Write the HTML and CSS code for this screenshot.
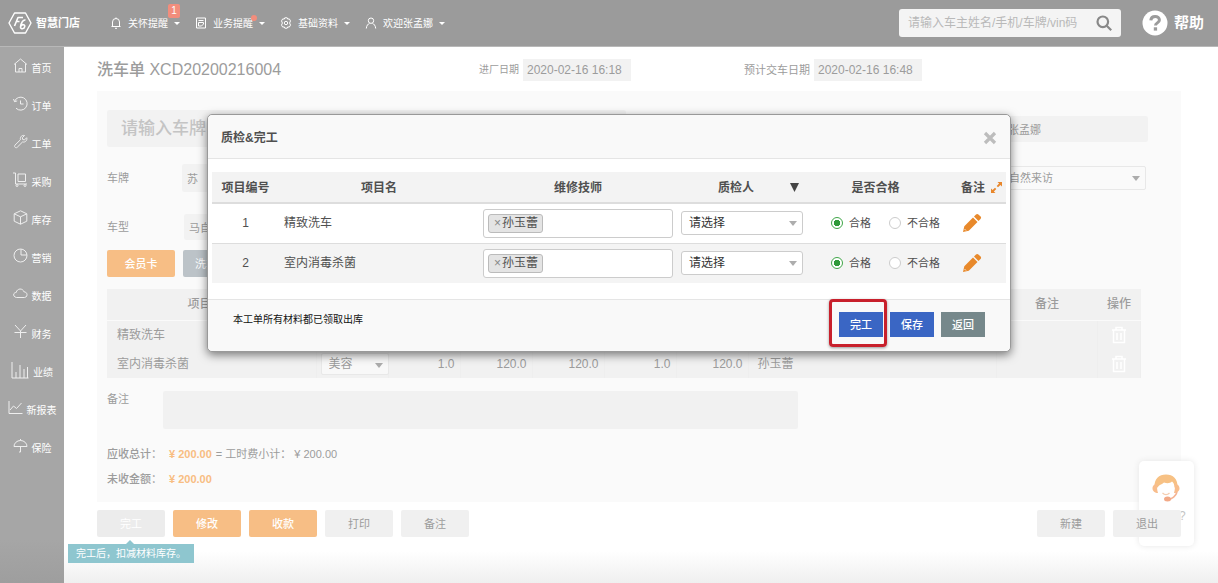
FILE: index.html
```html
<!DOCTYPE html>
<html lang="zh-CN">
<head>
<meta charset="utf-8">
<title>智慧门店 - 洗车单</title>
<link rel="stylesheet" href="styles.css">
</head>
<body>
<header class="topbar">
  <a class="brand" href="#">
    <svg width="24" height="24" viewBox="0 0 24 24" fill="none" stroke="currentColor" stroke-width="1.4" stroke-linejoin="round"><path d="M6.500 2h11l5.500 10-5.500 10h-11L1 12z"/><path d="M6.500 15l3.500-8.500h5M8 10.500h3.500M17.500 9c-3-.5-4.500 4-5 7 0 2.500 3.800 2.200 4.200-.3.400-2.300-2.500-2.800-3.700-.7" stroke-width="1.600"/></svg>
    <span>智慧门店</span>
  </a>
  <nav class="topnav">
    <button class="topnav-item" type="button">
      <svg class="nav-icon" viewBox="0 0 12 12"><path d="M1.500 9.500h9M2.500 9.500V5a3.500 3.500 0 0 1 7 0v4.500M5 11.300h2M6 .5v1"/></svg>
      <span class="nav-text">关怀提醒<b class="badge">1</b></span><i class="caret"></i>
    </button>
    <button class="topnav-item" type="button">
      <svg class="nav-icon" viewBox="0 0 12 12"><path d="M1.500 1h9v10h-9zM3.500 3.500h5M3.500 5.500h5v1.500l-2 2h-3z"/></svg>
      <span class="nav-text">业务提醒<b class="dot"></b></span><i class="caret"></i>
    </button>
    <button class="topnav-item" type="button">
      <svg class="nav-icon" viewBox="0 0 12 12"><path d="M4.800.8h2.400l.5 1.300 1.600-.2 1.200 2L9.600 6l.9 2.100-1.200 2-1.600-.2-.5 1.300H4.800l-.5-1.300-1.600.2-1.200-2L2.400 6l-.9-2.100 1.200-2 1.600.2z"/><circle cx="6" cy="6" r="1.700"/></svg>
      <span class="nav-text">基础资料</span><i class="caret"></i>
    </button>
    <button class="topnav-item" type="button">
      <svg class="nav-icon" viewBox="0 0 12 12"><circle cx="6" cy="3.700" r="2.700"/><path d="M1.300 11.500c.2-3 1.800-4.500 3.200-5.200M10.700 11.500c-.2-3-1.800-4.500-3.200-5.200"/></svg>
      <span class="nav-text">欢迎张孟娜</span><i class="caret"></i>
    </button>
  </nav>
  <form class="search">
    <input type="text" aria-label="搜索" placeholder="请输入车主姓名/手机/车牌/vin码">
    <button type="button" aria-label="搜索"><svg width="16" height="16" viewBox="0 0 16 16" fill="none" stroke="currentColor" stroke-width="2.200"><circle cx="6.800" cy="6.800" r="5.300"/><path d="M10.700 10.700l4.500 4.500"/></svg></button>
  </form>
  <a class="help" href="#">
    <svg width="26" height="26" viewBox="0 0 26 26"><circle cx="13" cy="13" r="12.500" fill="#fff"/><path d="M8.800 10.300c.2-2.600 2-3.900 4.300-3.900 2.500 0 4.300 1.400 4.300 3.500 0 3-3.900 2.900-3.900 5.600" fill="none" stroke="#9b9b9b" stroke-width="3"/><rect x="11.800" y="17.300" width="3.300" height="3.300" fill="#9b9b9b"/></svg>
    <span>帮助</span>
  </a>
</header>

<div class="shell">
  <nav class="sidebar">
    <a href="#"><svg class="side-icon" viewBox="0 0 15 15"><path d="M1 6.500L7.500 1 14 6.500M2.500 5.500V14h10V5.500M6 14v-3.500h3V14"/></svg>首页</a>
    <a href="#"><svg class="side-icon" viewBox="0 0 15 15"><path d="M1.500 5.500A6.500 6.500 0 1 1 3 12.200M.5 3l1 2.700 2.700-.8M7.500 4.500V8h3"/></svg>订单</a>
    <a href="#"><svg class="side-icon" viewBox="0 0 15 15"><path d="M11.500 1.500L9.300 3.700l.4 1.800 1.800.4 2.200-2.200c.9 2.200-1.200 5-4.200 4.300l-5.300 5.300c-1.300 1.300-3.600-.6-2.200-2.200l5.400-5.300C6.700 2.800 9.300.8 11.500 1.500z"/></svg>工单</a>
    <a href="#"><svg class="side-icon" viewBox="0 0 15 15"><path d="M0 1h2.500v11H14M5 2h7.500v7.500H5z"/><circle cx="4" cy="13.500" r="1"/><circle cx="12" cy="13.500" r="1"/></svg>采购</a>
    <a href="#"><svg class="side-icon" viewBox="0 0 15 15"><path d="M7.500.8l6.300 3v7.400l-6.300 3-6.300-3V3.800zM1.200 3.800l6.300 3 6.300-3M7.500 6.800v7.400"/></svg>库存</a>
    <a href="#"><svg class="side-icon" viewBox="0 0 15 15"><circle cx="7.500" cy="7.500" r="6.500"/><path d="M8 1v6h6"/></svg>营销</a>
    <a href="#"><svg class="side-icon" viewBox="0 0 15 15"><path d="M3.500 11.500C-.3 11-.2 6.500 3.200 6.500 4 2 10 2 10.800 5.700c4.200.2 4.200 5.500.7 5.800z"/></svg>数据</a>
    <a href="#"><svg class="side-icon" viewBox="0 0 15 15"><path d="M2 1l5.500 6L13 1M7.500 7v7M1.500 8.500h12"/></svg>财务</a>
    <a href="#"><svg class="side-icon side-icon-wide" viewBox="0 0 18 18"><path d="M1 1v16h16.500M5 17v-6M9 17V4M13 17V8M16.500 17V6"/></svg>业绩</a>
    <a href="#"><svg class="side-icon" viewBox="0 0 15 15"><path d="M1 1v12.500h13.500M2 10l3.500-4 3 2.500L13.500 3"/></svg>新报表</a>
    <a href="#"><svg class="side-icon" viewBox="0 0 15 15"><path d="M1 8.500a6.500 6 0 0 1 13 0zM7.500 1v1.500M7.500 8.500V14H6"/></svg>保险</a>
  </nav>

  <main class="main">
    <div class="titlebar">
      <h1>洗车单 XCD20200216004</h1>
      <div class="date"><label class="date-label" for="in">进厂日期</label><input id="in" type="text" value="2020-02-16 16:18"></div>
      <div class="date"><label for="out">预计交车日期</label><input id="out" type="text" value="2020-02-16 16:48"></div>
    </div>

    <section class="panel">
      <div class="form-row form-row-first">
        <input class="field plate-search" type="text" aria-label="车牌查询" placeholder="请输入车牌">
        <input class="field advisor" type="text" aria-label="服务顾问" value="张孟娜">
      </div>
      <div class="form-row form-row-plate">
        <label for="plate">车牌</label>
        <input class="field" id="plate" type="text" value="苏">
        <span class="select source"><select aria-label="客户来源"><option>自然来访</option></select></span>
      </div>
      <div class="form-row form-row-model">
        <label for="model">车型</label>
        <input class="field" id="model" type="text" value="马自">
      </div>
      <div class="cards">
        <button class="btn btn-orange" type="button">会员卡</button>
        <button class="btn btn-slate" type="button">洗车</button>
      </div>

      <table class="items">
        <colgroup><col class="c-name"><col class="c-num"><col class="c-num"><col class="c-num"><col class="c-num"><col class="c-num"><col class="c-num"><col><col class="c-remark"><col class="c-op"></colgroup>
        <thead><tr><th class="name-head">项目名</th><th></th><th></th><th></th><th></th><th></th><th></th><th></th><th>备注</th><th>操作</th></tr></thead>
        <tbody>
          <tr><td class="name">精致洗车</td><td></td><td></td><td></td><td></td><td></td><td></td><td></td><td></td>
            <td class="op"><button type="button" aria-label="删除"><svg class="trash" viewBox="0 0 16 18"><path d="M1 4h14M5 4V1.500h6V4M2.500 4v12.500h11V4M6 7v7M10 7v7"/></svg></button></td></tr>
          <tr><td class="name">室内消毒杀菌</td>
            <td class="kind"><span class="select"><select aria-label="类型"><option>美容</option></select></span></td>
            <td>1.0</td><td>120.0</td><td>120.0</td><td>1.0</td><td>120.0</td><td class="staff">孙玉蕾</td><td></td>
            <td class="op"><button type="button" aria-label="删除"><svg class="trash" viewBox="0 0 16 18"><path d="M1 4h14M5 4V1.500h6V4M2.500 4v12.500h11V4M6 7v7M10 7v7"/></svg></button></td></tr>
        </tbody>
      </table>

      <div class="remark"><label for="remark">备注</label><textarea id="remark"></textarea></div>
      <div class="totals">
        <p><b>应收总计：</b><strong>¥ 200.00</strong><span>= 工时费小计：</span><span class="subtotal">¥ 200.00</span></p>
        <p><b>未收金额：</b><strong>¥ 200.00</strong></p>
      </div>
    </section>

    <div class="actions">
      <div class="tip-host">
        <button class="btn btn-off" type="button">完工</button>
        <span class="tip">完工后，扣减材料库存。</span>
      </div>
      <button class="btn btn-orange" type="button">修改</button>
      <button class="btn btn-orange" type="button">收款</button>
      <button class="btn" type="button">打印</button>
      <button class="btn" type="button">备注</button>
      <span class="spacer"></span>
      <button class="btn" type="button">新建</button>
      <button class="btn" type="button">退出</button>
    </div>
  </main>
</div>

<aside class="chat">
  <svg width="30" height="30" viewBox="0 0 30 30">
    <path d="M3.500 14C3 6 8 1.500 15 1.500S27 6 26.500 14l-3 .5c0-3-1-5-2.500-6-2 2-5 2-8 1l-2 1.500C8.500 12 7.500 13 6.500 14.500z" fill="#f7c184"/>
    <path d="M6.500 11C3 11 1.500 13 1.500 15.500S4 20 7 20c-1-3-1.200-6-.5-9zM23.500 11c3.500 0 5 2 5 4.500S26 20 23 20c1-3 1.200-6 .5-9z" fill="#f8bd8c"/>
    <path d="M11.500 20c2 2 5 2 7 0" fill="none" stroke="#f5cdb0" stroke-width="1.300"/>
    <path d="M26 19c-1 4-5 7-9 7.500" fill="none" stroke="#f5b494" stroke-width="1.600"/>
    <ellipse cx="16.500" cy="26" rx="3.500" ry="2.500" fill="#f2a987"/>
  </svg>
  <span>?</span>
</aside>

<div class="overlay">
  <section class="modal" role="dialog" aria-labelledby="modal-title">
    <header class="modal-head">
      <h2 id="modal-title">质检&amp;完工</h2>
      <button class="close" type="button" aria-label="关闭"><svg width="14" height="14" viewBox="0 0 14 14"><path d="M2 2l10 10M12 2L2 12" stroke="#bdbdbd" stroke-width="3.200"/></svg></button>
    </header>
    <div class="modal-body">
      <table class="check">
        <colgroup><col class="k-no"><col class="k-name"><col><col class="k-person"><col class="k-pass"><col class="k-note"></colgroup>
        <thead><tr><th>项目编号</th><th>项目名</th><th>维修技师</th>
          <th><div class="person-head"><span>质检人</span><svg width="9" height="9" viewBox="0 0 9 9"><path d="M0 0h9L4.500 9z" fill="#444"/></svg></div></th>
          <th>是否合格</th>
          <th><div class="note-head">备注<svg width="11" height="11" viewBox="0 0 11 11"><path d="M6.500 0H11v4.500L9.400 2.900 7 5.300l-1.300-1.300 2.400-2.400zM4.500 11H0V6.500l1.600 1.600L4 5.700 5.300 7 2.900 9.400z" fill="#e8872c"/></svg></div></th></tr></thead>
        <tbody>
          <tr><td>1</td><td class="name">精致洗车</td>
            <td><div class="tags"><span class="tag"><button type="button" aria-label="移除">×</button>孙玉蕾</span></div></td>
            <td><span class="select inspector"><select aria-label="质检人"><option>请选择</option></select></span></td>
            <td><div class="radios"><label><input type="radio" name="r1" checked>合格</label><label><input type="radio" name="r1">不合格</label></div></td>
            <td><button class="edit" type="button" aria-label="编辑备注"><svg width="20" height="20" viewBox="0 0 20 20" fill="#e8892b"><path d="M1 19l1.300-5.800L11 4.500 15.500 9l-8.700 8.700zM12 3.500l2-2c.8-.8 1.700-.8 2.400-.1l2.200 2.200c.7.700.7 1.600-.1 2.400l-2 2z"/><path d="M2.500 16l1.500 1.500" stroke="#fff" stroke-width=".8"/></svg></button></td></tr>
          <tr><td>2</td><td class="name">室内消毒杀菌</td>
            <td><div class="tags"><span class="tag"><button type="button" aria-label="移除">×</button>孙玉蕾</span></div></td>
            <td><span class="select inspector"><select aria-label="质检人"><option>请选择</option></select></span></td>
            <td><div class="radios"><label><input type="radio" name="r2" checked>合格</label><label><input type="radio" name="r2">不合格</label></div></td>
            <td><button class="edit" type="button" aria-label="编辑备注"><svg width="20" height="20" viewBox="0 0 20 20" fill="#e8892b"><path d="M1 19l1.300-5.800L11 4.500 15.500 9l-8.700 8.700zM12 3.500l2-2c.8-.8 1.700-.8 2.400-.1l2.200 2.200c.7.700.7 1.600-.1 2.400l-2 2z"/><path d="M2.500 16l1.500 1.500" stroke="#fff" stroke-width=".8"/></svg></button></td></tr>
        </tbody>
      </table>
    </div>
    <footer class="modal-foot">
      <p>本工单所有材料都已领取出库</p>
      <div class="modal-actions">
        <span class="marked"><button class="mbtn" type="button">完工</button></span>
        <button class="mbtn" type="button">保存</button>
        <button class="mbtn mbtn-gray" type="button">返回</button>
      </div>
    </footer>
  </section>
</div>
</body>
</html>
```
FILE: styles.css
```css
* { box-sizing: border-box; }

body {
  margin: 0;
  min-height: 100vh;
  display: flex;
  flex-direction: column;
  position: relative;
  font: 12px/16px "Liberation Sans", "Noto Sans CJK SC", sans-serif;
  color: #9c9c9c;
  background: #fff;
}

h1, h2, p { margin: 0; }
a { color: inherit; text-decoration: none; }

button, input, select, textarea {
  margin: 0;
  padding: 0;
  border: 0;
  border-radius: 0;
  font: inherit;
  color: inherit;
  background: none;
}

svg { display: block; flex: none; }

/* Top bar */
.topbar {
  display: flex;
  align-items: center;
  height: 47px;
  padding: 0 14px 0 8px;
  border-bottom: 1px solid #b8b8b8;
  color: #fff;
  background: #9b9b9b;
}

.brand {
  display: flex;
  align-items: center;
  gap: 4px;
  width: 102px;
  font-size: 11px;
  font-weight: 700;
}

.topnav {
  display: flex;
  gap: 15px;
  flex: 1;
  font-size: 10px;
}

.topnav-item {
  display: flex;
  align-items: center;
  gap: 6px;
}

.nav-icon {
  width: 12px;
  height: 12px;
  fill: none;
  stroke: currentColor;
  stroke-width: 1;
}

.nav-text { position: relative; padding-top: 1px; }

.caret {
  border: 3px solid transparent;
  border-top-color: currentColor;
  border-bottom: 0;
}

.badge, .dot {
  position: absolute;
  background: #f28d7c;
}

.badge {
  top: -11px;
  right: -12px;
  width: 12px;
  line-height: 14px;
  border-radius: 2px;
  font-weight: 400;
}

.dot {
  top: 0;
  right: -4px;
  width: 6px;
  height: 6px;
  border-radius: 50%;
}

.search {
  display: flex;
  align-items: center;
  width: 222px;
  height: 28px;
  padding: 0 9px;
  border-radius: 3px;
  background: #f4f4f4;
  color: #888;
}

.search input { flex: 1; min-width: 0; }
.search input::placeholder { color: #b9b9b9; }

.help {
  display: flex;
  align-items: center;
  gap: 6px;
  margin-left: 21px;
  font-size: 15px;
  font-weight: 700;
}

/* Page frame */
.shell { display: flex; flex: 1; }

.sidebar {
  width: 64px;
  font-size: 10px;
  color: #fff;
  background: linear-gradient(#a6a6a6 92%, #9e9e9e);
}

.sidebar a {
  display: flex;
  justify-content: center;
  align-items: flex-end;
  gap: 4px;
  height: 38px;
  padding-bottom: 9px;
  line-height: 14px;
}

.side-icon {
  width: 15px;
  height: 15px;
  margin-bottom: 3px;
  fill: none;
  stroke: #eee;
  stroke-width: 1;
}

.side-icon-wide { width: 18px; height: 18px; margin-bottom: 1px; }

.main {
  flex: 1;
  min-width: 0;
  padding: 12px 37px 0 33px;
  background: linear-gradient(#fff 94%, #efefef);
}

.titlebar {
  display: grid;
  grid-template-columns: 382px 265px 1fr;
  align-items: center;
  height: 22px;
  margin-bottom: 10px;
}

.titlebar h1 { font-size: 16px; font-weight: 500; }

.date {
  display: flex;
  align-items: center;
  gap: 4px;
  font-size: 11px;
}

.date-label { font-size: 10px; }

.date input {
  width: 108px;
  height: 22px;
  padding: 0 4px;
  font-size: 12px;
  background: #f2f2f2;
}

/* Order panel */
.panel {
  padding: 19px 33px 10px 10px;
  background: #fafafa;
}

.form-row {
  display: grid;
  align-items: center;
  font-size: 11px;
}

.form-row-first {
  grid-template-columns: 519px 147px;
  justify-content: space-between;
  margin-bottom: 17px;
}

.form-row-plate {
  grid-template-columns: 75px 160px 1fr 145px;
  margin-bottom: 22px;
  padding-right: 2px;
}

.form-row-plate .source { grid-column: 4; }
.form-row-model { grid-template-columns: 77px 160px; margin-bottom: 10px; }

.field {
  height: 26px;
  padding: 0 5px;
  border-radius: 2px;
  background: #f2f2f2;
}

.form-row-plate .field { height: 28px; }
.form-row .advisor { padding-left: 7px; }

.form-row .plate-search {
  height: 37px;
  padding-left: 14px;
  font-size: 17px;
  font-weight: 500;
}

.plate-search::placeholder { color: #c4c4c4; }

.select {
  display: flex;
  position: relative;
  border: 1px solid #e8e8e8;
  border-radius: 2px;
}

.select select {
  flex: 1;
  min-width: 0;
  height: 22px;
  padding: 0 7px;
  appearance: none;
}

.select::after {
  content: "";
  position: absolute;
  right: 5px;
  top: 9px;
  border: 4px solid transparent;
  border-top: 5px solid #999;
  border-bottom: 0;
  opacity: 0.8;
  pointer-events: none;
}

.cards, .actions { display: flex; gap: 8px; }
.cards { margin-bottom: 12px; }

.btn {
  width: 68px;
  height: 27px;
  border-radius: 2px;
  font-size: 11px;
  background: #f0f0f0;
}

.btn-off { color: #fff; background: #ececec; }
.btn-orange { color: #fff; font-weight: 500; background: #f7be85; }

.btn-slate {
  padding-left: 12px;
  text-align: left;
  color: #fff;
  background: #bcc3c8;
}

.items {
  width: calc(100% - 7px);
  table-layout: fixed;
  border-collapse: collapse;
  background: #f1f1f1;
}

.items th {
  height: 31px;
  padding: 0;
  border-bottom: 1px solid #fafafa;
  font-weight: 500;
}

.items td {
  height: 29px;
  padding: 0 5px 0 0;
  border-right: 1px solid #eee;
  text-align: right;
}

.items .name { padding-left: 10px; text-align: left; }
.items .name-head { padding-right: 12px; }
.items .staff { padding-left: 9px; text-align: left; }
.items .kind { padding: 0; }
.kind .select { width: 68px; margin-left: 4px; background: #f8f8f8; }
.kind .select select { height: 20px; }
.items .op { padding: 0; }
.op button { display: block; margin: 0 auto; }

.c-name { width: 209px; }
.c-num { width: 72px; }
.c-remark { width: 101px; }
.c-op { width: 43px; }

.trash {
  width: 16px;
  height: 18px;
  fill: none;
  stroke: #fff;
  stroke-width: 1.5;
}

.remark {
  display: grid;
  grid-template-columns: 56px 635px;
  margin: 13px 0;
  font-size: 11px;
}

.remark textarea {
  height: 38px;
  border-radius: 2px;
  resize: none;
  background: #f1f1f1;
}

.totals p {
  display: flex;
  line-height: 25px;
  font-size: 11px;
}

.totals b { width: 62px; font-weight: 500; }
.totals strong { margin-right: 4px; color: #f8bd82; }
.subtotal { margin-left: 3px; }

.actions { position: relative; z-index: 1; padding-top: 8px; }
.spacer { flex: 1; }
.tip-host { position: relative; }

.tip {
  position: absolute;
  top: 34px;
  left: -29px;
  padding: 0 8px;
  line-height: 19px;
  font-size: 10px;
  white-space: nowrap;
  color: #fff;
  background: #8ec6cf;
}

.tip::before {
  content: "";
  position: absolute;
  left: 58px;
  bottom: 100%;
  border: 4px solid transparent;
  border-top: 0;
  border-bottom-color: #8ec6cf;
}

.chat {
  position: absolute;
  top: 461px;
  right: 24px;
  width: 55px;
  height: 85px;
  padding: 12px;
  border-radius: 5px;
  background: #fff;
  box-shadow: 0 0 6px #e6e6e6;
}

.chat span {
  display: block;
  margin: 5px 0 0 28px;
  color: #c4c4c4;
}

/* Dialog */
.overlay {
  position: absolute;
  inset: 0;
  z-index: 2;
  display: flex;
  justify-content: center;
  align-items: flex-start;
  padding-top: 114px;
}

.modal {
  width: 66%;
  border: 1px solid #999;
  border-radius: 5px;
  color: #505050;
  background: #fff;
  box-shadow: 0 3px 10px rgba(0, 0, 0, 0.5);
}

.modal-head, .modal-foot {
  display: flex;
  justify-content: space-between;
  background: #f9f9f9;
}

.modal-head {
  align-items: center;
  height: 44px;
  padding: 2px 13px 0 13px;
  border-bottom: 1px solid #e5e5e5;
  border-radius: 5px 5px 0 0;
}

.modal-head h2 { font-size: 12px; font-weight: 700; }
.modal-body { padding: 13px 4px 16px; }

.check {
  width: 100%;
  table-layout: fixed;
  border-collapse: collapse;
  text-align: center;
}

.check th {
  height: 31px;
  padding: 1px 0 0;
  border-bottom: 2px solid #ddd;
  font-weight: 700;
  background: #f3f3f3;
}

.check td { height: 40px; padding: 0 4px; }
.check tbody tr + tr { border-top: 1px solid #ddd; background: #f4f4f4; }
.check .name { padding-left: 5px; text-align: left; }

.k-no { width: 67px; }
.k-name { width: 200px; }
.k-person { width: 130px; }
.k-pass { width: 137px; }
.k-note { width: 62px; }

.person-head {
  display: flex;
  justify-content: space-between;
  align-items: center;
  padding: 0 8px 0 41px;
}

.note-head {
  display: flex;
  align-items: center;
  justify-content: flex-end;
  gap: 6px;
  padding-right: 4px;
}

.tags {
  display: flex;
  align-items: center;
  height: 29px;
  padding: 0 4px;
  border: 1px solid #ccc;
  border-radius: 3px;
  background: #fff;
}

.tag {
  display: flex;
  align-items: center;
  gap: 1px;
  height: 19px;
  padding: 0 4px 0 5px;
  border: 1px solid #bbb;
  border-radius: 3px;
  background: #e4e4e4;
}

.tag button { color: #888; }

.inspector {
  border-color: #ccc;
  border-radius: 3px;
  color: #333;
  background: #fff;
}

.radios {
  display: flex;
  gap: 18px;
  padding-left: 20px;
  font-size: 11px;
}

.radios label { display: flex; align-items: center; gap: 6px; }

.radios input {
  width: 12px;
  height: 12px;
  border: 1px solid #ccc;
  border-radius: 50%;
  appearance: none;
  background: #fff;
}

.radios input:checked {
  border-color: #3fa648;
  background: radial-gradient(circle, #2f9a3a 0 3px, #fff 3px);
}

.edit { display: block; margin-left: 14px; }

.modal-foot {
  height: 52px;
  padding: 12px 25px 0;
  border-top: 1px solid #e5e5e5;
  border-radius: 0 0 5px 5px;
  font-size: 10px;
  color: #111;
}

.modal-actions { display: flex; gap: 7px; }

.mbtn {
  width: 44px;
  height: 25px;
  font-size: 11px;
  font-weight: 500;
  color: #fff;
  background: #3a66c4;
}

.mbtn-gray { background: #76888b; }
.marked { position: relative; height: 25px; }

.marked::after {
  content: "";
  position: absolute;
  inset: -13px -4px -10px -10px;
  border: 3px solid #c8202c;
  border-radius: 4px;
  box-shadow: 0 1px 3px #999;
  pointer-events: none;
}
```
